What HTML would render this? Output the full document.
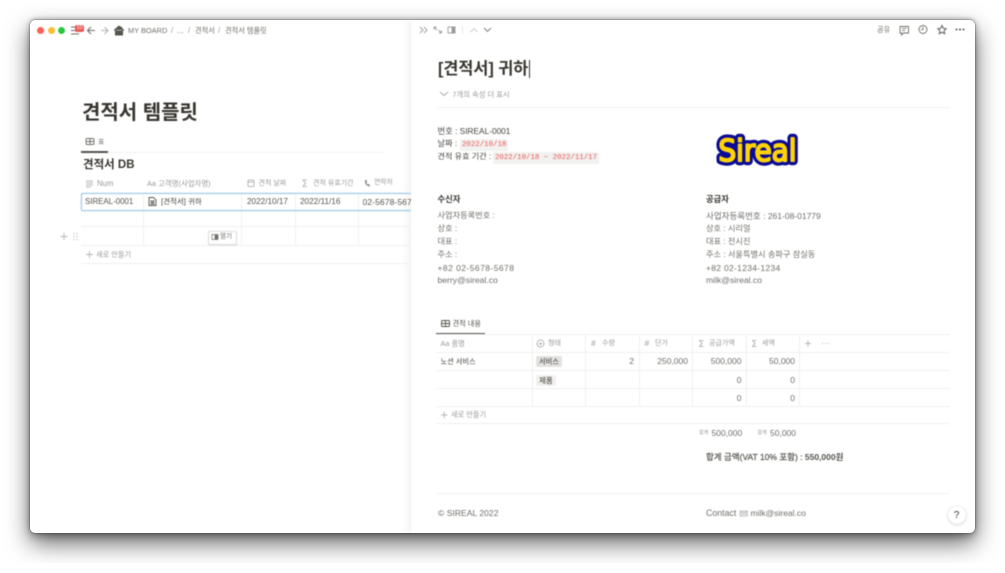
<!DOCTYPE html>
<html lang="ko"><head><meta charset="utf-8"><style>
html,body{margin:0;padding:0;background:#fff}
body{width:1005px;height:573px;overflow:hidden;position:relative;font-family:"Liberation Sans","Noto Sans CJK KR",sans-serif;color:#37352f}
#clip{position:absolute;left:0;top:0;width:1005px;height:563px;overflow:hidden}
#win{position:absolute;left:30px;top:20px;width:945px;height:513px;background:#fff;border-radius:5px;box-shadow:0 10px 24px rgba(0,0,0,.6),0 3px 8px rgba(0,0,0,.3),0 0 0 .5px rgba(0,0,0,.25),0 -1px 4px rgba(0,0,0,.25)}
#pg{position:absolute;left:0;top:0;width:1005px;height:573px;filter:blur(.45px)}
.t{position:absolute;white-space:nowrap;line-height:1}
.l{position:absolute;background:#ededec}
.g{color:#9b9a97}
.s{color:#6f6e69}
.b{font-weight:700}
svg{position:absolute;overflow:visible;fill:none}
.code{position:absolute;background:#f1f1ef;border-radius:2px;color:#eb5757;font-family:"Liberation Mono","Noto Sans CJK KR",monospace;font-size:7.400px;line-height:12px;height:12px;padding:0 2px;white-space:nowrap}
.tag{position:absolute;border-radius:2px;font-size:7.500px;height:11px;line-height:11px;padding:0 3px;color:#37352f;white-space:nowrap}
</style></head><body>
<div id="clip"><div id="win"></div></div>
<div id="pg">
<!-- side panel shading -->
<div style="position:absolute;left:402px;top:21px;width:9px;height:511px;background:linear-gradient(90deg,rgba(0,0,0,0),rgba(0,0,0,.04))"></div>
<div style="position:absolute;left:410px;top:21px;width:1px;height:511px;background:#f1f1f0"></div>

<!-- traffic lights -->
<div style="position:absolute;left:36.500px;top:26.500px;width:7px;height:7px;border-radius:50%;background:#ff5f57"></div>
<div style="position:absolute;left:47.500px;top:26.500px;width:7px;height:7px;border-radius:50%;background:#febc2e"></div>
<div style="position:absolute;left:57.500px;top:26.500px;width:7px;height:7px;border-radius:50%;background:#28c840"></div>

<!-- top-left nav -->
<svg style="left:0;top:0" width="1005" height="573" stroke="#6f6e69" stroke-width="1">
<path d="M71 27h8M71 30.500h8M71 34h8"/>
<path d="M95 30.500h-7M91 27l-3.500 3.500L91 34" stroke-width="1.100"/>
<path d="M101 30.500h7M104.500 27l3.500 3.500-3.500 3.500" stroke="#b5b4b1" stroke-width="1.100"/>
<path d="M114 30.500l5-4.500 5 4.500M115.500 30v5h7v-5M121.500 26.500v2" fill="#55534e" stroke="#55534e"/>
</svg>
<div style="position:absolute;left:75px;top:25px;width:9px;height:7px;background:#eb5757;border-radius:2px;color:#fff;font-size:5.500px;line-height:7px;text-align:center">10</div>
<div class="t s" style="left:128px;top:26.500px;font-size:7.400px">MY BOARD</div>
<div class="t g" style="left:171px;top:26.500px;font-size:8px">/</div>
<div class="t s" style="left:177px;top:26.500px;font-size:8px">...</div>
<div class="t g" style="left:188px;top:26.500px;font-size:8px">/</div>
<div class="t s" style="left:195px;top:26.500px;font-size:7.200px">견적서</div>
<div class="t g" style="left:218px;top:26.500px;font-size:8px">/</div>
<div class="t s" style="left:225px;top:26.500px;font-size:7.200px">견적서 템플릿</div>

<!-- left content -->
<div class="t b" style="left:82px;top:103px;font-size:20px">견적서 템플릿</div>
<svg style="left:0;top:0" width="420" height="573" stroke="#6f6e69" stroke-width=".9">
<rect x="86" y="138.500" width="8" height="6" rx="1"/><path d="M86 141.500h8M90 138.500v6"/>
</svg>
<div class="t s" style="left:98px;top:138.500px;font-size:7px">표</div>
<div class="l" style="left:81px;top:152px;width:303px;height:1px;background:#f1f1f0"></div>
<div class="l" style="left:81px;top:151px;width:27px;height:1.500px;background:#55534e"></div>
<div class="t b" style="left:83px;top:159.500px;font-size:11.500px">견적서 DB</div>

<svg style="left:0;top:0" width="420" height="300" stroke="#a5a4a0" stroke-width=".8">
<path d="M86 181h7M86 183h7M86 185h7M86 187h5"/>
<rect x="248" y="180" width="6" height="6.500" rx="1"/><path d="M248 182h6"/>
<path d="M307 180h-4l2.500 3.200-2.500 3.300h4"/>
<path d="M365 180.500c-.5 3 1.500 5.500 4.500 6l.5-1.500-1.500-1-1 .5-1-1.500.5-1-.5-2.500z" fill="#8a8986" stroke="none"/>
</svg>
<div class="t g" style="left:97px;top:179.500px;font-size:7.800px">Num</div>
<div class="t g" style="left:147px;top:179.500px;font-size:7.400px">Aa 고객명(사업자명)</div>
<div class="t g" style="left:258.500px;top:180px;font-size:7px">견적 날짜</div>
<div class="t g" style="left:313px;top:180px;font-size:7px">견적 유효기간</div>
<div class="t g" style="left:374px;top:180px;font-size:6.800px">연락처</div>

<div class="l" style="left:81px;top:193px;width:329px;height:1px;background:#ededec"></div>
<div class="l" style="left:81px;top:226px;width:329px;height:1px;background:#f0f0ef"></div>
<div class="l" style="left:81px;top:245px;width:329px;height:1px;background:#f0f0ef"></div>
<div class="l" style="left:81px;top:263px;width:329px;height:1px;background:#f0f0ef"></div>
<div class="l" style="left:143px;top:193px;width:1px;height:52px;background:#f0f0ef"></div>
<div class="l" style="left:241px;top:193px;width:1px;height:52px;background:#f0f0ef"></div>
<div class="l" style="left:295px;top:193px;width:1px;height:52px;background:#f0f0ef"></div>
<div class="l" style="left:358px;top:193px;width:1px;height:52px;background:#f0f0ef"></div>
<div style="position:absolute;left:81px;top:193px;width:340px;height:16px;border:1px solid #9cc6e8;border-radius:2px;box-shadow:0 0 1.500px #bcd9f0;clip-path:inset(-3px 11px -3px -3px)"></div>
<div style="position:absolute;left:411px;top:190px;width:20px;height:24px;background:#fff"></div>

<div class="t" style="left:85px;top:197.500px;font-size:7.900px;color:#55534e">SIREAL-0001</div>
<svg style="left:0;top:0" width="200" height="220" stroke="#55534e" stroke-width=".9">
<path d="M149 197.500h4.500l2.500 2.500v5.500h-7z"/><path d="M150.500 201h4M150.500 202.500h4M150.500 204h4"/>
</svg>
<div class="t" style="left:161px;top:197.500px;font-size:7.500px;color:#45433e">[견적서] 귀하</div>
<div class="t" style="left:247px;top:197.500px;font-size:8.200px;color:#55534e">2022/10/17</div>
<div class="t" style="left:300px;top:197.500px;font-size:8.200px;color:#55534e">2022/11/16</div>
<div class="t" style="left:362.500px;top:197.500px;width:48px;overflow:hidden;font-size:8.500px;letter-spacing:.1px;color:#55534e">02-5678-5678</div>

<svg style="left:0;top:0" width="300" height="270" stroke="#b5b4b1" stroke-width=".9">
<path d="M60.500 236.500h7M64 233v7"/>
<path d="M73.500 233.500h1M76.500 233.500h1M73.500 236.500h1M76.500 236.500h1M73.500 239.500h1M76.500 239.500h1" stroke-width="1.200"/>
<path d="M86 254.500h7M89.500 251v7"/>
</svg>
<div style="position:absolute;left:208px;top:231px;width:27px;height:12px;border:.5px solid #dededc;border-radius:2px;background:#fff;box-shadow:0 .5px 1px rgba(0,0,0,.1)"></div>
<svg style="left:0;top:0" width="230" height="243" stroke="#6f6e69" stroke-width=".7"><rect x="212" y="234.500" width="6" height="5"/><rect x="215" y="235" width="2.500" height="4" fill="#6f6e69"/></svg>
<div class="t s" style="left:220px;top:234px;font-size:6.500px">열기</div>
<div class="t g" style="left:96px;top:250.500px;font-size:7.200px">새로 만들기</div>

<!-- right toolbar -->
<svg style="left:0;top:0" width="1005" height="60" stroke="#9b9a97" stroke-width=".9">
<path d="M420 27l3 3-3 3M424 27l3 3-3 3"/>
<path d="M434 27h2.500M434 27v2.500M434 27l3 3M441.500 33h-2.500M441.500 33v-2.500M441.500 33l-3-3"/>
<rect x="448" y="27" width="7" height="6"/><rect x="452" y="27" width="3" height="6" fill="#9b9a97"/>
<path d="M462.500 26v8" stroke="#e6e6e5"/>
<path d="M470.500 32l3.500-3.500 3.500 3.500" stroke="#c8c7c5"/>
<path d="M484 28l3.500 3.500L491 28" stroke="#7a7975"/>
<path d="M900 26.500h8.500v6.500h-5l-2 2v-2h-1.500z" stroke="#6f6e69"/><path d="M902 28.500h4.500M902 30.500h3" stroke="#6f6e69" stroke-width=".7"/>
<circle cx="923" cy="29.500" r="4" stroke="#6f6e69"/><path d="M923 27v2.700h-2" stroke="#6f6e69"/>
<path d="M942 25.500l1.300 2.800 3 .4-2.200 2 .6 3-2.700-1.500-2.700 1.500.6-3-2.200-2 3-.4z" stroke="#55534e"/>
<circle cx="956.500" cy="29.500" r="1" fill="#55534e" stroke="none"/><circle cx="960" cy="29.500" r="1" fill="#55534e" stroke="none"/><circle cx="963.500" cy="29.500" r="1" fill="#55534e" stroke="none"/>
</svg>
<div class="t s" style="left:877px;top:26px;font-size:7.200px">공유</div>

<!-- right content -->
<div class="t b" style="left:438px;top:61px;font-size:16.300px">[견적서] 귀하</div>
<div class="l" style="left:528.500px;top:60px;width:.8px;height:18px;background:#37352f"></div>
<svg style="left:0;top:0" width="460" height="110" stroke="#a5a4a0" stroke-width=".9"><path d="M440 92l4 3.500 4-3.500"/></svg>
<div class="t g" style="left:452.500px;top:90.500px;font-size:7.300px">7개의 속성 더 표시</div>
<div class="l" style="left:437px;top:107px;width:513px;height:1px;background:#f1f1f0"></div>

<div class="t" style="left:437.500px;top:127px;font-size:8.300px;color:#45433e">번호 : SIREAL-0001</div>
<div class="t" style="left:437.500px;top:140px;font-size:8.200px;color:#45433e">날짜 :</div>
<div class="code" style="left:460px;top:138.500px">2022/10/18</div>
<div class="t" style="left:437.500px;top:153px;font-size:8.100px;color:#45433e">견적 유효 기간 :</div>
<div class="code" style="left:493px;top:151.500px">2022/10/18 ~ 2022/11/17</div>

<!-- logo -->
<svg style="left:0;top:0" width="1005" height="200" stroke-linejoin="round" stroke-linecap="round">
<text x="757.500" y="161" text-anchor="middle" font-family="'DejaVu Sans','Liberation Sans',sans-serif" font-size="30" textLength="78" lengthAdjust="spacingAndGlyphs" stroke="#0a0a96" stroke-width="8.500" fill="#0a0a96">Sireal</text>
<text x="757.500" y="161" text-anchor="middle" font-family="'DejaVu Sans','Liberation Sans',sans-serif" font-size="30" textLength="78" lengthAdjust="spacingAndGlyphs" stroke="#ffd400" stroke-width="2" fill="#ffd400">Sireal</text>
</svg>

<div class="t b" style="left:437.500px;top:194.500px;font-size:8.300px">수신자</div>
<div class="t b" style="left:706px;top:194.500px;font-size:8.300px">공급자</div>
<div class="t s" style="left:437.500px;top:211.500px;font-size:8.200px">사업자등록번호 :</div>
<div class="t s" style="left:437.500px;top:224.500px;font-size:8.200px">상호 :</div>
<div class="t s" style="left:437.500px;top:237.500px;font-size:8.200px">대표 :</div>
<div class="t s" style="left:437.500px;top:250.500px;font-size:8.200px">주소 :</div>
<div class="t s" style="left:437.500px;top:263.500px;font-size:8.500px;letter-spacing:.45px">+82 02-5678-5678</div>
<div class="t s" style="left:437.500px;top:276px;font-size:8.600px">berry@sireal.co</div>
<div class="t s" style="left:706px;top:211.500px;font-size:8.500px">사업자등록번호 : 261-08-01779</div>
<div class="t s" style="left:706px;top:224.500px;font-size:8.200px">상호 : 시리얼</div>
<div class="t s" style="left:706px;top:237.500px;font-size:8.200px">대표 : 전시진</div>
<div class="t s" style="left:706px;top:250.500px;font-size:8.200px">주소 : 서울특별시 송파구 잠실동</div>
<div class="t s" style="left:706px;top:263.500px;font-size:8.500px;letter-spacing:.3px">+82 02-1234-1234</div>
<div class="t s" style="left:706px;top:276px;font-size:8.600px">milk@sireal.co</div>

<!-- estimate table -->
<svg style="left:0;top:0" width="460" height="335" stroke="#55534e" stroke-width=".9"><rect x="441.500" y="320.500" width="8" height="6" rx="1"/><path d="M441.500 323.500h8M445.500 320.500v6"/></svg>
<div class="t s" style="left:452.500px;top:320px;font-size:7.200px;color:#55534e">견적 내용</div>
<div class="l" style="left:436px;top:333.500px;width:514px;height:1px;background:#f0f0ef"></div>
<div class="l" style="left:436px;top:332.500px;width:49px;height:1.500px;background:#55534e"></div>
<div class="l" style="left:436px;top:351.500px;width:514px;height:1px;background:#f0f0ef"></div>
<div class="l" style="left:436px;top:370px;width:514px;height:1px;background:#f0f0ef"></div>
<div class="l" style="left:436px;top:388px;width:514px;height:1px;background:#f0f0ef"></div>
<div class="l" style="left:436px;top:406px;width:514px;height:1px;background:#f0f0ef"></div>
<div class="l" style="left:436px;top:423px;width:514px;height:1px;background:#f0f0ef"></div>
<div class="l" style="left:531.500px;top:334px;width:1px;height:72px;background:#f0f0ef"></div>
<div class="l" style="left:585px;top:334px;width:1px;height:72px;background:#f0f0ef"></div>
<div class="l" style="left:638.500px;top:334px;width:1px;height:72px;background:#f0f0ef"></div>
<div class="l" style="left:692px;top:334px;width:1px;height:72px;background:#f0f0ef"></div>
<div class="l" style="left:745.500px;top:334px;width:1px;height:72px;background:#f0f0ef"></div>
<div class="l" style="left:799px;top:334px;width:1px;height:72px;background:#f0f0ef"></div>

<div class="t g" style="left:440.500px;top:339.500px;font-size:7.300px">Aa 품명</div>
<svg style="left:0;top:0" width="850" height="430" stroke="#a5a4a0" stroke-width=".8">
<circle cx="540.500" cy="343.500" r="3.500"/><path d="M539 343l1.500 1.500L542 343" fill="#a5a4a0"/>
<path d="M703.500 340.500h-4l2.500 3-2.500 3h4M756.500 340.500h-4l2.500 3-2.500 3h4"/>
<path d="M805 343.500h6M808 340.500v6"/>
<path d="M822 343.500h.8M825 343.500h.8M828 343.500h.8" stroke-width="1"/>
<path d="M441 415h6.500M444.200 411.800v6.500"/>
</svg>
<div class="t g" style="left:548px;top:339.500px;font-size:7px">형태</div>
<div class="t g" style="left:591px;top:338.500px;font-size:8.500px">#</div>
<div class="t g" style="left:602px;top:339.500px;font-size:7px">수량</div>
<div class="t g" style="left:644.500px;top:338.500px;font-size:8.500px">#</div>
<div class="t g" style="left:655px;top:339.500px;font-size:7px">단가</div>
<div class="t g" style="left:709px;top:339.500px;font-size:7px">공급가액</div>
<div class="t g" style="left:762px;top:339.500px;font-size:7px">세액</div>

<div class="t" style="left:440.500px;top:357.500px;font-size:7.200px;color:#45433e">노션 서비스</div>
<div class="tag" style="left:536px;top:356px;background:#e3e2e0;font-size:7.200px">서비스</div>
<div class="tag" style="left:536px;top:374.500px;background:#f1f0ee">제품</div>
<div class="t s" style="right:371px;top:357px;font-size:8.500px">2</div>
<div class="t s" style="right:317px;top:357px;font-size:8.500px">250,000</div>
<div class="t s" style="right:263.500px;top:357px;font-size:8.500px">500,000</div>
<div class="t s" style="right:210px;top:357px;font-size:8.500px">50,000</div>
<div class="t s" style="right:263.500px;top:375.500px;font-size:8.500px">0</div>
<div class="t s" style="right:210px;top:375.500px;font-size:8.500px">0</div>
<div class="t s" style="right:263.500px;top:393.500px;font-size:8.500px">0</div>
<div class="t s" style="right:210px;top:393.500px;font-size:8.500px">0</div>
<div class="t g" style="left:451px;top:411px;font-size:7.200px">새로 만들기</div>
<div class="t g" style="left:699px;top:431px;font-size:5px">합계</div>
<div class="t s" style="left:711.500px;top:429px;font-size:8.500px">500,000</div>
<div class="t g" style="left:757.500px;top:431px;font-size:5px">합계</div>
<div class="t s" style="left:770px;top:429px;font-size:8.500px">50,000</div>

<div class="t b" style="left:706px;top:452.500px;font-size:8.500px;color:#55534e"><span style="font-weight:400;-webkit-text-stroke:.2px #55534e">합계 금액(VAT 10% 포함) :</span> 550,000원</div>
<div class="l" style="left:436px;top:492.500px;width:514px;height:1px;background:#f1f1f0"></div>
<div class="t s" style="left:438px;top:508.500px;font-size:8.600px">© SIREAL 2022</div>
<div class="t s" style="left:706px;top:508.500px;font-size:8.800px">Contact</div>
<svg style="left:0;top:0" width="760" height="520" stroke="#b5b4b1" stroke-width=".7"><rect x="740" y="511" width="7.500" height="5" fill="#e6e6e5"/><path d="M740 511l3.700 2.800 3.800-2.800"/></svg>
<div class="t s" style="left:750.500px;top:508.500px;font-size:8.500px">milk@sireal.co</div>
<div style="position:absolute;left:947.500px;top:506px;width:18px;height:18px;border-radius:50%;background:#fff;box-shadow:0 0 0 .5px rgba(0,0,0,.08),0 1px 3px rgba(0,0,0,.15);color:#37352f;font-size:10px;line-height:19px;text-align:center">?</div>
</div>
</body></html>
